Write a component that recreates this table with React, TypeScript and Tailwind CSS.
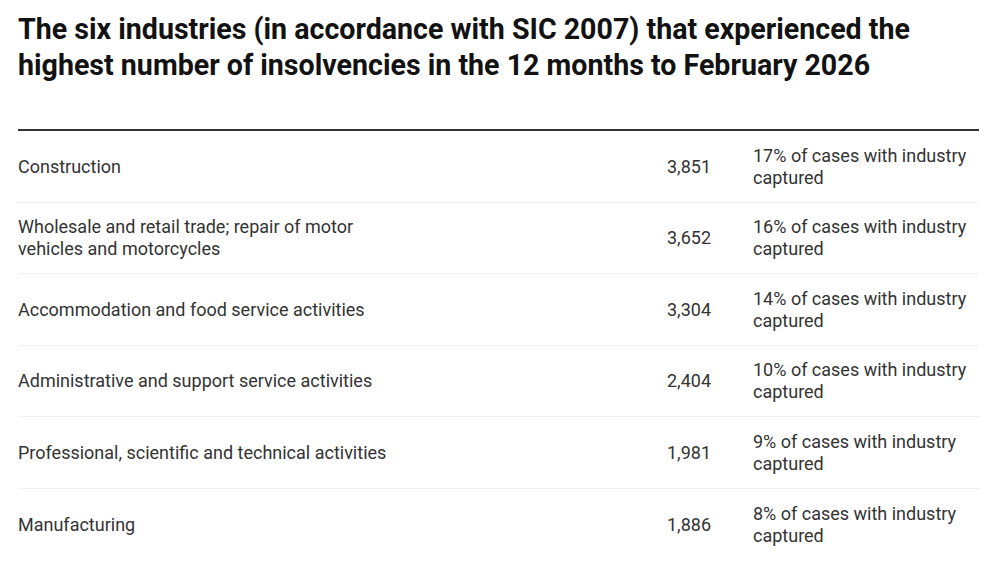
const rows = [
  { industry: "Construction", count: "3,851", share: "17% of cases with industry captured" },
  { industry: "Wholesale and retail trade; repair of motor vehicles and motorcycles", count: "3,652", share: "16% of cases with industry captured" },
  { industry: "Accommodation and food service activities", count: "3,304", share: "14% of cases with industry captured" },
  { industry: "Administrative and support service activities", count: "2,404", share: "10% of cases with industry captured" },
  { industry: "Professional, scientific and technical activities", count: "1,981", share: "9% of cases with industry captured" },
  { industry: "Manufacturing", count: "1,886", share: "8% of cases with industry captured" },
];

export default function App() {
  return (
    <div className="w-[1000px] h-[563px] bg-white overflow-hidden px-[18px] pt-[11px] font-['Roboto',sans-serif]">
      <h1 className="text-[28.6px] leading-[36px] font-bold text-[#121212]">
        The six industries (in accordance with SIC 2007) that experienced the highest number of insolvencies in the 12 months to February 2026
      </h1>

      <div className="mt-[46px] w-[961px] border-t-2 border-[#333]">
        {rows.map((row) => (
          <div
            key={row.industry}
            className="grid grid-cols-[380px_1fr_247px] items-center h-[71.5px] pt-px border-b border-[#eeeeee] last:border-b-0 text-[18px] leading-[22px] text-[#333]"
          >
            <div>{row.industry}</div>
            <div className="text-right pr-[21px]">{row.count}</div>
            <div className="pl-[21px]">{row.share}</div>
          </div>
        ))}
      </div>
    </div>
  );
}
